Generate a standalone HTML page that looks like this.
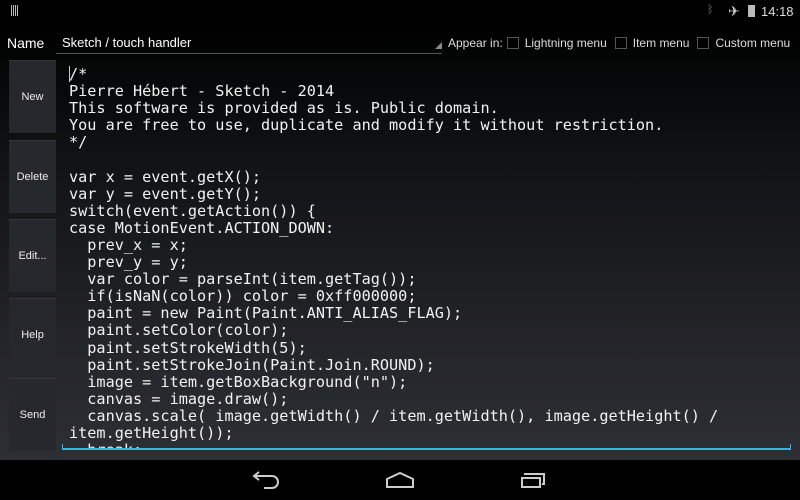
<!DOCTYPE html>
<html><head><meta charset="utf-8"><style>
*{margin:0;padding:0;box-sizing:border-box}
body{width:800px;height:500px;overflow:hidden;position:relative;font-family:"Liberation Sans",sans-serif;color:#fff;background:#000}
#main{position:absolute;left:0;top:25px;width:800px;height:435px;background:linear-gradient(#000 0%,#101214 30%,#23262a 75%,#2c2f34 100%)}
.sb{position:absolute;top:0;left:0;width:800px;height:25px;background:#000;font-size:13px;color:#ddd}
.btn{position:absolute;left:9px;width:47px;height:73px;background:#25282c;border-top:1px solid #34373b;font-size:11px;color:#eee;display:flex;align-items:center;justify-content:center}
pre{position:absolute;left:69px;top:63px;font-family:"DejaVu Sans Mono","Liberation Mono",monospace;font-size:15.2px;line-height:17.1px;color:#f2f2f2;letter-spacing:0}
.cb{display:inline-block;width:12px;height:12px;border:1px solid #555;vertical-align:-2px;margin:0 6px 0 4px}
.nav{position:absolute;top:460px;left:0;width:800px;height:40px;background:#000}
</style></head><body>
<div class="sb">
<div style="position:absolute;left:11px;top:5px;width:8px;height:11px;background:repeating-linear-gradient(90deg,#bbb 0 1px,#000 1px 2px)"></div>
<div style="position:absolute;left:707px;top:4px;font-size:11px;color:#777">ᛒ</div>
<div style="position:absolute;left:728px;top:3px;font-size:14px;color:#ccc">✈</div>
<div style="position:absolute;left:748px;top:5px;width:7px;height:12px;background:#bbb"></div>
<div style="position:absolute;left:761px;top:4px">14:18</div>
</div>
<div id="main">
<div style="position:absolute;left:7px;top:10px;font-size:14px">Name</div>
<div style="position:absolute;left:62px;top:10px;font-size:13px">Sketch / touch handler</div>
<div style="position:absolute;left:56px;top:28px;width:386px;height:1px;background:#555"></div>
<div style="position:absolute;left:435px;top:17px;width:0;height:0;border-left:7px solid transparent;border-bottom:7px solid #888"></div>
<div style="position:absolute;left:448px;top:11px;font-size:12px;color:#ddd">Appear in:<span class="cb"></span>Lightning menu<span class="cb" style="margin-left:8px"></span>Item menu<span class="cb" style="margin-left:8px"></span>Custom menu</div>
</div>
<div class="btn" style="top:60px">New</div>
<div class="btn" style="top:140px">Delete</div>
<div class="btn" style="top:219px">Edit...</div>
<div class="btn" style="top:298px">Help</div>
<div class="btn" style="top:378px">Send</div>
<div style="position:absolute;left:62px;top:60px;width:730px;height:389px;overflow:hidden">
<pre style="left:7px;top:6px">/*
Pierre Hébert - Sketch - 2014
This software is provided as is. Public domain.
You are free to use, duplicate and modify it without restriction.
*/

var x = event.getX();
var y = event.getY();
switch(event.getAction()) {
case MotionEvent.ACTION_DOWN:
  prev_x = x;
  prev_y = y;
  var color = parseInt(item.getTag());
  if(isNaN(color)) color = 0xff000000;
  paint = new Paint(Paint.ANTI_ALIAS_FLAG);
  paint.setColor(color);
  paint.setStrokeWidth(5);
  paint.setStrokeJoin(Paint.Join.ROUND);
  image = item.getBoxBackground("n");
  canvas = image.draw();
  canvas.scale( image.getWidth() / item.getWidth(), image.getHeight() /
item.getHeight());
  break;</pre>
<div style="position:absolute;left:7px;top:6px;width:1px;height:16px;background:#ccc"></div>
</div>
<div style="position:absolute;left:62px;top:448px;width:729px;height:2px;background:#33b5e5"></div>
<div style="position:absolute;left:62px;top:444px;width:1px;height:5px;background:#33b5e5"></div>
<div style="position:absolute;left:790px;top:444px;width:1px;height:5px;background:#33b5e5"></div>
<div class="nav">
<svg width="800" height="40" style="position:absolute;left:0;top:0">
<g fill="none" stroke="#ccc" stroke-width="2">
<path d="M255 16 H272 a6 6 0 0 1 0 12 H264"/><path d="M259 12 L254 16 L259 20"/>
<path d="M387 27 V19 L400 13 L413 19 V27 Z"/>
<rect x="522" y="18" width="18" height="9"/><path d="M525 15 V14 H544 V24 H542"/>
</g></svg>
</div>
</body></html>
